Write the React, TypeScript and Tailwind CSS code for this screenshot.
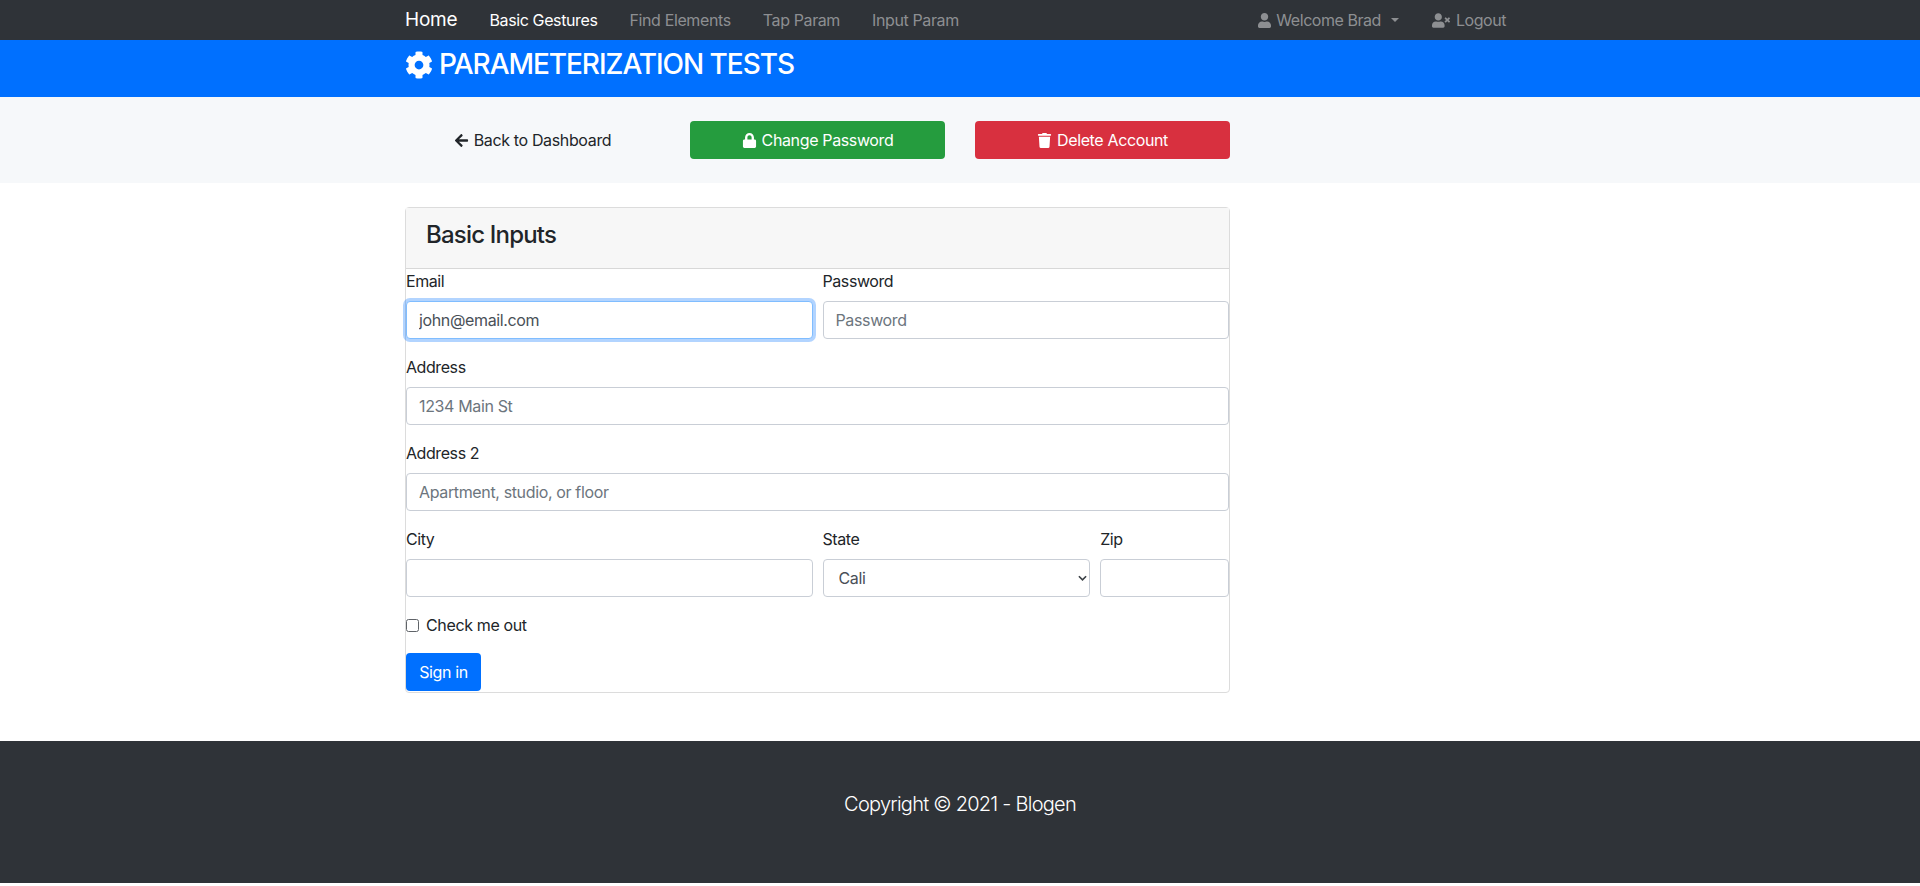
import { FaArrowLeft, FaCog, FaLock, FaTrash, FaUser, FaUserTimes } from "react-icons/fa";

const inputBase =
  "block w-full h-[38px] rounded-[4px] border bg-white px-3 text-[16px] text-[#495057] outline-none placeholder:text-[#6c757d]";
const inputIdle = `${inputBase} border-[#c9ced6]`;

function Field({ label, className, children }: { label: string; className?: string; children: React.ReactNode }) {
  return (
    <div className={className}>
      <label className="mb-2 block text-[16px] leading-6 tracking-[-0.42px]">{label}</label>
      {children}
    </div>
  );
}

export default function App() {
  return (
    <div className="min-h-[886px] bg-white font-['Inter','Liberation_Sans',sans-serif] text-[16px] leading-6 tracking-[-0.36px] text-[#212529]">
      <nav className="h-10 bg-[#2f3338]">
        <div className="mx-auto flex h-10 w-[1110px] items-center">
          <a className="mr-4 text-[19px] tracking-[-0.2px] text-white">Home</a>
          <div className="flex items-center gap-[32px] pl-[16px] text-[16px] tracking-[-0.38px]">
            <a className="text-white">Basic Gestures</a>
            <a className="text-[#8d8f92]">Find Elements</a>
            <a className="text-[#8d8f92]">Tap Param</a>
            <a className="text-[#8d8f92]">Input Param</a>
          </div>
          <div className="ml-auto flex items-center gap-[33px] pr-[9px] text-[16px] tracking-[-0.45px] text-[#8d8f92]">
            <a className="flex items-center gap-[5px]">
              <FaUser className="h-[15px] w-[13px]" />
              Welcome Brad
              <span className="ml-[5px] h-0 w-0 border-x-[4.5px] border-t-[4.5px] border-x-transparent border-t-[#8d8f92]" />
            </a>
            <a className="flex items-center gap-[6px]">
              <FaUserTimes className="h-[15px] w-[18px]" />
              Logout
            </a>
          </div>
        </div>
      </nav>

      <header className="bg-[#0070ff] py-2 text-white">
        <div className="mx-auto w-[1110px]">
          <h1 className="mb-2 flex items-center gap-[6px] text-[28px] leading-[33px] font-medium tracking-[-1.05px]">
            <FaCog className="size-[28px]" />
            PARAMETERIZATION TESTS
          </h1>
        </div>
      </header>

      <section className="bg-[#f6f8fa] py-6">
        <div className="mx-auto grid w-[1140px] grid-cols-4 gap-[30px] px-[15px]">
          <a className="flex h-[38px] items-center justify-center gap-[5px] text-[#212529]">
            <FaArrowLeft className="size-[15px]" />
            Back to Dashboard
          </a>
          <a className="flex h-[38px] items-center justify-center gap-[5px] rounded-[4px] bg-[#259c3e] text-white">
            <FaLock className="size-[15px]" />
            Change Password
          </a>
          <a className="flex h-[38px] items-center justify-center gap-[5px] rounded-[4px] bg-[#d8303f] text-white">
            <FaTrash className="size-[15px]" />
            Delete Account
          </a>
        </div>
      </section>

      <main className="mx-auto mt-6 mb-12 w-[1110px]">
        <div className="w-[825px] rounded-[4px] border border-[#dcdcdc]">
          <div className="h-[61px] border-b border-[#d8d8d8] bg-[#f7f7f7] px-5 pt-3">
            <h4 className="text-[24px] leading-[29px] font-medium tracking-[-0.8px]">Basic Inputs</h4>
          </div>
          <form>
            <div className="mb-4 grid grid-cols-2 gap-[10px]">
              <Field label="Email">
                <input
                  defaultValue="john@email.com"
                  className={`${inputBase} border-[#80bdff] shadow-[0_0_0_3px_rgba(0,112,255,0.3)]`}
                />
              </Field>
              <Field label="Password">
                <input placeholder="Password" className={inputIdle} />
              </Field>
            </div>
            <Field label="Address" className="mb-4">
              <input placeholder="1234 Main St" className={inputIdle} />
            </Field>
            <Field label="Address 2" className="mb-4">
              <input placeholder="Apartment, studio, or floor" className={inputIdle} />
            </Field>
            <div className="mb-4 grid grid-cols-[406.5px_267.67px_128.83px] gap-[10px]">
              <Field label="City">
                <input className={inputIdle} />
              </Field>
              <Field label="State">
                <div className="relative">
                  <select defaultValue="Cali" className={`${inputIdle} appearance-none pl-[15px]`}>
                    <option>Cali</option>
                  </select>
                  <svg
                    viewBox="0 0 10 6"
                    className="pointer-events-none absolute top-[16px] right-[3px] h-[6px] w-[9px]"
                    fill="none"
                    stroke="#3b4046"
                    strokeWidth="1.8"
                  >
                    <path d="M1 1l4 4 4-4" />
                  </svg>
                </div>
              </Field>
              <Field label="Zip">
                <input className={inputIdle} />
              </Field>
            </div>
            <div className="mb-4 flex h-6 items-center">
              <input type="checkbox" className="m-0 size-[13px] appearance-none rounded-[2.5px] border border-[#5f6368] bg-white" />
              <label className="ml-[7px]">Check me out</label>
            </div>
            <button type="button" className="block h-[38px] w-[75px] rounded-[4px] bg-[#0070ff] text-white">
              Sign in
            </button>
          </form>
          <div className="h-px" />
        </div>
      </main>

      <footer className="bg-[#2f3338] p-12 pb-[64px] text-center text-[20px] leading-[30px] font-light tracking-[-0.75px] text-white">
        Copyright © 2021 - Blogen
      </footer>
    </div>
  );
}
